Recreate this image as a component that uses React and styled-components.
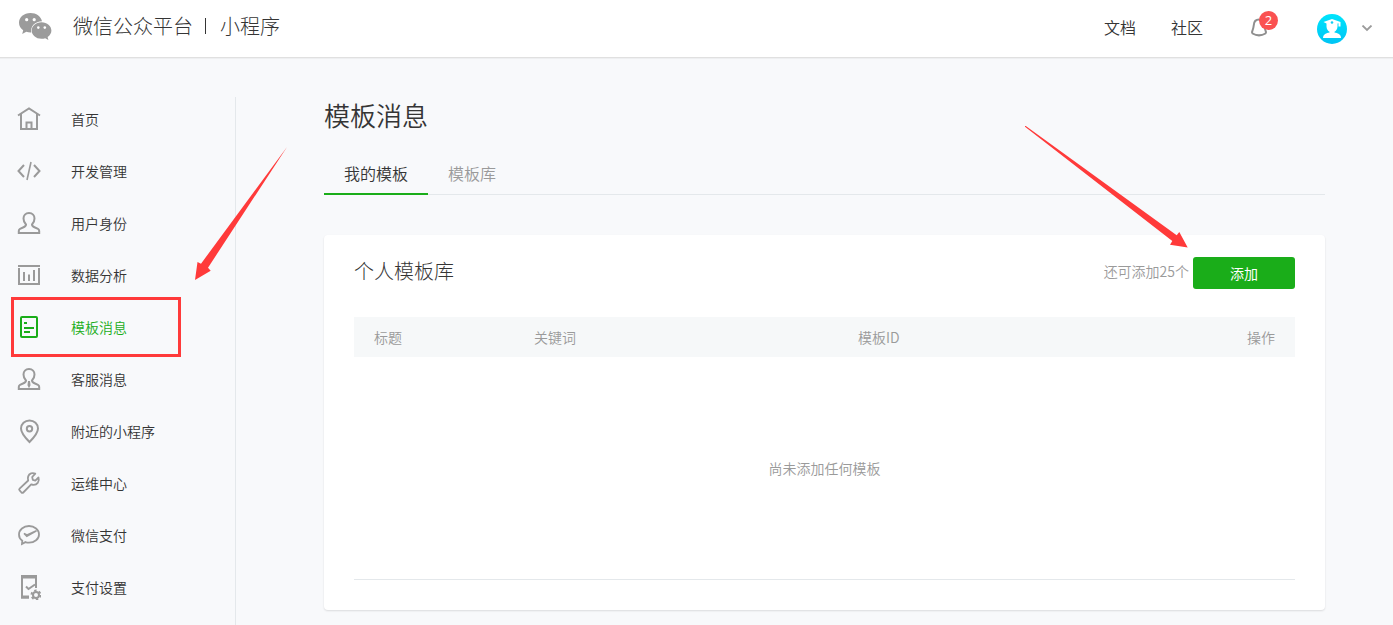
import React from "react";
import styled, { createGlobalStyle, ThemeProvider } from "styled-components";

const theme = {
  green: "#1aad19",
  red: "#ff3a3a",
  text: "#353535",
  muted: "#9a9a9a",
  line: "#e4e8eb",
  bg: "#f8f9fb"
};

const GlobalStyle = createGlobalStyle`
  * {
    box-sizing: border-box;
  }
  body {
    margin: 0;
    background: ${theme.bg};
    color: ${theme.text};
    font-family: "Noto Sans CJK SC", "Liberation Sans", sans-serif;
    font-size: 14px;
    font-weight: 350;
  }
  a {
    color: inherit;
    text-decoration: none;
  }
`;

const Page = styled.div`
  min-height: 100vh;
  display: flex;
  flex-direction: column;
`;

const Header = styled.header`
  height: 58px;
  padding: 0 20px 0 18px;
  display: flex;
  align-items: center;
  justify-content: space-between;
  background: white;
  border-bottom: 1px solid #e0e0e0;
  box-shadow: 0 1px 1px rgba(0, 0, 0, 0.04);
`;

const Brand = styled.a`
  display: flex;
  align-items: center;
  gap: 20px;
  font-size: 20px;
  font-weight: 300;
  line-height: 28px;
  padding-bottom: 4px;
`;

const BrandName = styled.span`
  display: flex;
  align-items: center;
  padding-bottom: 2px;
`;

const Divider = styled.span`
  width: 1px;
  height: 16px;
  margin: 0 14px 0 12px;
  background: ${props => props.theme.text};
`;

const HeaderNav = styled.nav`
  display: flex;
  align-items: center;
  font-size: 16px;
  line-height: 24px;
`;

const HeaderLink = styled.a`
  margin-right: 35px;
  padding-bottom: 4px;
`;

const IconButton = styled.button`
  position: relative;
  display: flex;
  padding: 0;
  border: 0;
  background: none;
  cursor: pointer;
`;

const BellButton = styled(IconButton)`
  margin: 0 49px 0 12px;
  padding-bottom: 2px;
`;

const UserButton = styled(IconButton)`
  align-items: center;
  gap: 14px;
`;

const Badge = styled.span`
  position: absolute;
  top: -7px;
  left: 9px;
  width: 19px;
  height: 19px;
  border-radius: 50%;
  background: #fa5151;
  color: white;
  font-family: "Open Sans", sans-serif;
  font-size: 13px;
  font-weight: 400;
  line-height: 18px;
  text-align: center;
`;

const Body = styled.div`
  flex: 1;
  display: flex;
`;

const Sidebar = styled.nav`
  flex: 0 0 236px;
  margin-top: 39px;
  padding-top: 11px;
  border-right: 1px solid ${props => props.theme.line};
`;

const Menu = styled.ul`
  margin: 0;
  padding: 0;
  list-style: none;
  display: flex;
  flex-direction: column;
  gap: 30px;
`;

const MenuItem = styled.li`
  position: relative;
`;

const MenuLink = styled.a`
  display: flex;
  align-items: center;
  gap: 30px;
  height: 22px;
  padding-left: 17px;
  line-height: 22px;
  color: ${props => (props.$active ? props.theme.green : props.theme.text)};
`;

const Glyph = styled.svg`
  flex: none;
  width: 24px;
  height: 26px;
  fill: none;
  stroke: ${props => (props.$active ? props.theme.green : props.theme.muted)};
  stroke-width: 2;
`;

const Frame = styled.span`
  position: absolute;
  top: -19px;
  left: 11px;
  width: 170px;
  height: 60px;
  border: 3px solid ${props => props.theme.red};
  pointer-events: none;
`;

const Arrow = styled.svg`
  position: absolute;
  top: ${props => props.$top}px;
  left: ${props => props.$left}px;
  z-index: 1;
  fill: ${props => props.theme.red};
  pointer-events: none;
`;

const Main = styled.main`
  flex: 1;
  min-width: 0;
  padding: 39px 68px 15px 88px;
`;

const Title = styled.h1`
  margin: 0 0 20px;
  font-size: 26px;
  font-weight: 350;
  line-height: 36px;
`;

const Tabs = styled.div`
  display: flex;
  margin-bottom: 40px;
  box-shadow: inset 0 -1px ${props => props.theme.line};
`;

const Tab = styled.a`
  padding: 0 20px;
  font-size: 16px;
  line-height: 40px;
  border-bottom: 2px solid
    ${props => (props.$active ? props.theme.green : "transparent")};
  color: ${props => (props.$active ? props.theme.text : props.theme.muted)};
`;

const Card = styled.section`
  padding: 22px 30px 30px;
  background: white;
  border-radius: 4px;
  box-shadow: 0 1px 2px rgba(0, 0, 0, 0.12);
`;

const CardHead = styled.div`
  display: flex;
  align-items: flex-start;
  margin-bottom: 28px;
`;

const CardTitle = styled.h2`
  flex: 1;
  margin: 0;
  font-size: 20px;
  font-weight: 300;
  line-height: 28px;
`;

const Hint = styled.span`
  margin-right: 4px;
  line-height: 28px;
  color: ${props => props.theme.muted};
`;

const AddBox = styled.div`
  position: relative;
`;

const AddButton = styled.button`
  display: block;
  width: 102px;
  height: 32px;
  padding: 0;
  border: 0;
  border-radius: 3px;
  background: ${props => props.theme.green};
  color: white;
  font: inherit;
  font-weight: 400;
  line-height: 32px;
  cursor: pointer;
`;

const Table = styled.table`
  width: 100%;
  table-layout: fixed;
  border-collapse: collapse;
  border-bottom: 1px solid ${props => props.theme.line};
  color: ${props => props.theme.muted};
`;

const Th = styled.th`
  width: ${props => props.$width || "auto"};
  height: 40px;
  padding: 0 20px;
  background: #f6f8f9;
  font-weight: 350;
  text-align: ${props => props.$align || "left"};
`;

const Empty = styled.td`
  height: 222px;
  padding: 0;
  text-align: center;
`;

const menu = [
  {
    text: "首页",
    icon: (
      <>
        <path d="M1 9.5L12 2.5L23 9.5" />
        <path d="M4 8V23H20V8" />
        <path d="M9.5 23V16.5H14.5V23" />
      </>
    )
  },
  {
    text: "开发管理",
    icon: (
      <>
        <path d="M7 7L1.500 13L7 19M17 7L22.500 13L17 19" />
        <path d="M14 4L10 22" strokeWidth="1.600" />
      </>
    )
  },
  {
    text: "用户身份",
    icon: (
      <path d="M12 3C8.500 3 6.500 5.500 6.500 8.500C6.500 11 7.500 13 9 14.500C9 16 8 16.700 6 17.500L3 18.800C2 19.300 1.800 20 1.800 21V23H22.200V21C22.200 20 22 19.300 21 18.800L18 17.500C16 16.700 15 16 15 14.500C16.500 13 17.500 11 17.500 8.500C17.500 5.500 15.500 3 12 3Z" />
    )
  },
  {
    text: "数据分析",
    icon: (
      <>
        <path d="M1 4H23" />
        <path d="M2 6V22H22V6" />
        <path d="M7 10V19M12 12.500V19M17 8V19" />
      </>
    )
  },
  {
    text: "模板消息",
    active: true,
    icon: (
      <>
        <rect x="4" y="3" width="16" height="20" rx="1" />
        <path d="M7 14H17M7 18H13M7 9H10" />
      </>
    )
  },
  {
    text: "客服消息",
    icon: (
      <>
        <path d="M12 3C8.500 3 6.500 5.500 6.500 8.500C6.500 11 7.500 13 9 14.500C9 16 8 16.700 6 17.500L3 18.800C2 19.300 1.800 20 1.800 21V23H22.200V21C22.200 20 22 19.300 21 18.800L18 17.500C16 16.700 15 16 15 14.500C16.500 13 17.500 11 17.500 8.500C17.500 5.500 15.500 3 12 3Z" />
        <path d="M12 15L11.500 19L12 20L12.500 19Z" />
      </>
    )
  },
  {
    text: "附近的小程序",
    icon: (
      <>
        <path d="M12.500 24C7 18.500 4 14.500 4 10.500C4 5.800 7.800 2.500 12.500 2.500S21 5.800 21 10.500C21 14.500 18 18.500 12.500 24Z" />
        <circle cx="12.500" cy="10.800" r="2.700" />
      </>
    )
  },
  {
    text: "运维中心",
    icon: (
      <path
        d="M18.300 3.600C15.400 2.500 12.200 3.400 11.200 6.400C10.700 7.800 10.800 9.200 11.200 10.500L2.600 18.600C2 19.200 2 19.800 2.600 20.400L4.500 22.500C5.100 23.100 5.700 23.100 6.300 22.500L14.200 14.400C16.600 15.200 19.300 14.800 20.900 12.600C22 11 22.100 9.200 21.500 7.500L18.300 10.600L15.800 9.900L15.200 7Z"
        strokeWidth="1.800"
        strokeLinejoin="round"
      />
    )
  },
  {
    text: "微信支付",
    icon: (
      <>
        <path
          d="M5.300 18.700C3.200 17.200 2 14.900 2 12.400C2 7.700 6.500 4 12 4S22 7.700 22 12.400S17.500 20.700 12 20.700C10.700 20.700 9.500 20.500 8.400 20.100L5 22Z"
          strokeWidth="1.800"
        />
        <path d="M7 11.500L9.800 14.300L19.500 8.800L10 13Z" strokeWidth="1.500" />
      </>
    )
  },
  {
    text: "支付设置",
    icon: (
      <>
        <path d="M12 23.500H5V2H19V14" />
        <path d="M4 3H20M4 23H12" strokeWidth="3" />
        <path d="M9 12.500L11.500 15L18 10.500" />
        <circle cx="19" cy="21" r="3" />
        <circle cx="19" cy="21" r="4.500" strokeDasharray="2.360 2.360" />
      </>
    )
  }
];

const Logo = () => (
  <svg width="35" height="28" viewBox="0 0 35 28" aria-hidden="true">
    <path
      fill="#9b9b9b"
      d="M12.500 0C5.800 0 1 4.400 1 9.800C1 12.900 2.600 15.500 5.200 17.300L4.200 21L8.300 18.800C10 19.400 11.500 19.600 13.300 19.500C12 13.500 17.200 8.300 24 8.300C23 3.500 18.300 0 12.500 0Z"
    />
    <path
      fill="#9b9b9b"
      d="M23.500 9.200C17.800 9.200 13.700 13 13.700 17.500S17.800 25.800 23.500 25.800C24.800 25.800 26.100 25.600 27.200 25.200L30.400 27L29.600 24C32 22.400 33.400 20.100 33.400 17.500C33.400 13 29.200 9.200 23.500 9.200Z"
    />
    <g fill="white">
      <circle cx="8.700" cy="6.700" r="1.600" />
      <circle cx="16.200" cy="6.700" r="1.600" />
      <circle cx="20.300" cy="14.600" r="1.300" />
      <circle cx="26.800" cy="14.600" r="1.300" />
    </g>
  </svg>
);

const Bell = () => (
  <svg
    width="18"
    height="19"
    viewBox="0 0 18 19"
    fill="none"
    stroke="#8f8f8f"
    strokeWidth="2"
    strokeLinejoin="round"
  >
    <path d="M9 1.500C5.800 1.500 4 4 3.800 7C3.600 9.800 3 11.500 2 14.200L2.500 15.500C6.500 17.800 11.500 17.800 15.500 15.500L16 14.200C15 11.500 14.400 9.800 14.200 7C14 4 12.200 1.500 9 1.500Z" />
  </svg>
);

const Avatar = () => (
  <svg width="30" height="30" viewBox="0 0 30 30" aria-hidden="true">
    <defs>
      <linearGradient id="avatar" x1="0" y1="0" x2="0" y2="1">
        <stop offset="0" stopColor="#00e4fc" />
        <stop offset="1" stopColor="#00c4f4" />
      </linearGradient>
    </defs>
    <circle cx="15" cy="15" r="15" fill="url(#avatar)" />
    <g fill="white">
      <path d="M6.500 8L15 5L23.500 8V12.500H21.500V9.200L20.500 9.600V12.500C20.500 15 19 17 17.500 17.700V18.500C20.500 19 24 20 24 24H6C6 20 9.500 19 12.500 18.500V17.700C11 17 9.500 15 9.500 12.500V9.600Z" />
    </g>
    <circle cx="15" cy="8.500" r="1.300" fill="#10cdf3" />
  </svg>
);

export default () => (
  <ThemeProvider theme={theme}>
    <GlobalStyle />
    <Page>
      <Header>
        <Brand href="#">
          <Logo />
          <BrandName>
            微信公众平台
            <Divider />
            小程序
          </BrandName>
        </Brand>
        <HeaderNav>
          <HeaderLink href="#">文档</HeaderLink>
          <HeaderLink href="#">社区</HeaderLink>
          <BellButton aria-label="通知">
            <Bell />
            <Badge>2</Badge>
          </BellButton>
          <UserButton aria-label="账号">
            <Avatar />
            <svg width="12" height="8" viewBox="0 0 12 8" fill="none" stroke="#9b9b9b" strokeWidth="1.800">
              <path d="M1.500 0.500L6 5L10.500 0.500" />
            </svg>
          </UserButton>
        </HeaderNav>
      </Header>
      <Body>
        <Sidebar>
          <Menu>
            {menu.map(({ text, icon, active }) => (
              <MenuItem key={text}>
                <MenuLink href="#" $active={active}>
                  <Glyph viewBox="0 0 24 26" $active={active}>
                    {icon}
                  </Glyph>
                  {text}
                </MenuLink>
                {active && (
                  <>
                    <Frame />
                    <Arrow width="92" height="133" $left={195} $top={-169}>
                      <path d="M92 0L6 116.700L2.500 115L0 133L15.700 123.700L13 120.700Z" />
                    </Arrow>
                  </>
                )}
              </MenuItem>
            ))}
          </Menu>
        </Sidebar>
        <Main>
          <Title>模板消息</Title>
          <Tabs>
            <Tab href="#" $active>
              我的模板
            </Tab>
            <Tab href="#">模板库</Tab>
          </Tabs>
          <Card>
            <CardHead>
              <CardTitle>个人模板库</CardTitle>
              <Hint>还可添加25个</Hint>
              <AddBox>
                <AddButton>添加</AddButton>
                <Arrow width="163" height="122" $left={-168} $top={-131}>
                  <path d="M0 0V0.800L147.300 115L145 118.700L162.700 121.500L154.300 106L151.700 109.300L0.800 0Z" />
                </Arrow>
              </AddBox>
            </CardHead>
            <Table>
              <thead>
                <tr>
                  <Th $width="160px">标题</Th>
                  <Th $width="324px">关键词</Th>
                  <Th>模板ID</Th>
                  <Th $align="right">操作</Th>
                </tr>
              </thead>
              <tbody>
                <tr>
                  <Empty colSpan={4}>尚未添加任何模板</Empty>
                </tr>
              </tbody>
            </Table>
          </Card>
        </Main>
      </Body>
    </Page>
  </ThemeProvider>
);
